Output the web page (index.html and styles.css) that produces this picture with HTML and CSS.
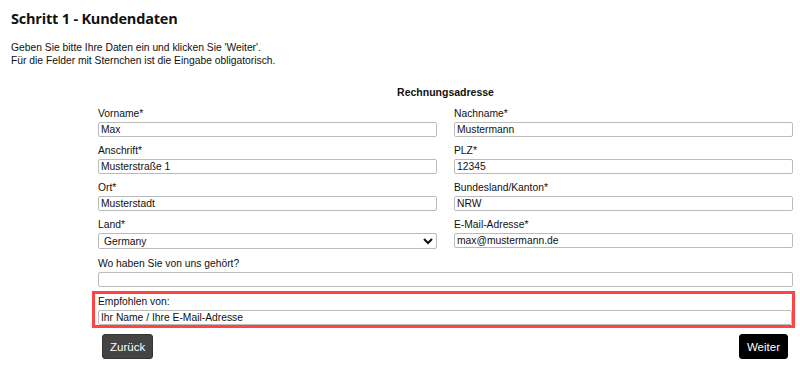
FILE: index.html
```html
<!DOCTYPE html>
<html lang="de">
<head>
    <meta charset="UTF-8">
    <title>Schritt 1 - Kundendaten</title>
    <link rel="stylesheet" href="styles.css">
</head>
<body>

    <div class="page">
        <h1>Schritt 1 - Kundendaten</h1>
        <p class="intro">
            Geben Sie bitte Ihre Daten ein und klicken Sie 'Weiter'.<br>
            Für die Felder mit Sternchen ist die Eingabe obligatorisch.
        </p>

        <div class="form-box">
            <h3>Rechnungsadresse</h3>
            <div class="grid">
                <div class="field">
                    <label for="vorname">Vorname*</label>
                    <input type="text" id="vorname" value="Max">
                </div>
                <div class="field">
                    <label for="nachname">Nachname*</label>
                    <input type="text" id="nachname" value="Mustermann">
                </div>
                <div class="field">
                    <label for="anschrift">Anschrift*</label>
                    <input type="text" id="anschrift" value="Musterstraße 1">
                </div>
                <div class="field">
                    <label for="plz">PLZ*</label>
                    <input type="text" id="plz" value="12345">
                </div>
                <div class="field">
                    <label for="ort">Ort*</label>
                    <input type="text" id="ort" value="Musterstadt">
                </div>
                <div class="field">
                    <label for="land_bl">Bundesland/Kanton*</label>
                    <input type="text" id="land_bl" value="NRW">
                </div>
                <div class="field">
                    <label for="land">Land*</label>
                    <select id="land">
                        <option>Germany</option>
                        <option>Austria</option>
                        <option>Switzerland</option>
                    </select>
                </div>
                <div class="field">
                    <label for="email">E-Mail-Adresse*</label>
                    <input type="email" id="email" value="max@mustermann.de">
                </div>
                <div class="field wide">
                    <label for="quelle">Wo haben Sie von uns gehört?</label>
                    <input type="text" id="quelle">
                </div>
            </div>

            <div class="highlight">
                <label for="empfohlen">Empfohlen von:</label>
                <input type="text" id="empfohlen" value="Ihr Name / Ihre E-Mail-Adresse">
            </div>

            <div class="buttons">
                <button class="btn-back">Zurück</button>
                <button class="btn-next">Weiter</button>
            </div>
        </div>
    </div>

</body>
</html>
```

FILE: styles.css
```css
body {
    margin: 0;
    font-family: "Liberation Sans", Arial, sans-serif;
    font-size: 10.3px;
    color: #111;
    background: white;
}
.page {
    padding: 0 11px;
}
h1 {
    font-family: "Open Sans", sans-serif;
    font-weight: bold;
    font-size: 14.5px;
    letter-spacing: -0.2px;
    margin: 0;
    padding-top: 8px;
    line-height: 22px;
}
.intro {
    margin: 11px 0 0 0;
    line-height: 13px;
}
.form-box {
    width: 695px;
    margin-left: 87px;
}
h3 {
    text-align: center;
    font-size: 10.5px;
    font-weight: bold;
    margin: 17px 0 0 0;
    line-height: 16px;
}
.grid {
    display: grid;
    grid-template-columns: 339px 339px;
    column-gap: 17px;
}
.field {
    display: flex;
    flex-direction: column;
}
.field.wide {
    grid-column: 1 / 3;
}
.field.wide label {
    padding-top: 8px;
}
label {
    display: block;
    line-height: 13px;
    padding-top: 7px;
    margin-bottom: 2px;
}
input, select {
    display: block;
    font-family: "Liberation Sans", Arial, sans-serif;
    font-size: 10.3px;
    color: #111;
    height: 15px;
    line-height: 13px;
    padding: 0 2px;
    margin: 0;
    border: 1px solid #bbb;
    border-radius: 2px;
    box-sizing: border-box;
    width: 100%;
    background: white;
}
select {
    height: 16px;
    padding: 0 1px;
}
.highlight {
    border: 3px solid #ff4444;
    margin: 4px -2px 0 -6px;
    padding: 0 0 0 3px;
}
.highlight label {
    padding-top: 1px;
}
.highlight input {
    width: 694px;
}
.buttons {
    display: flex;
    justify-content: space-between;
    margin: 6px 5px 0 4px;
}
button {
    font-family: "Liberation Sans", Arial, sans-serif;
    font-size: 11.5px;
    color: white;
    height: 25px;
    padding: 0 7px;
    border-radius: 3px;
    cursor: pointer;
}
.btn-back {
    background: #444;
    border: 1px solid #333;
}
.btn-next {
    background: #000;
    border: 1px solid #000;
}
```
